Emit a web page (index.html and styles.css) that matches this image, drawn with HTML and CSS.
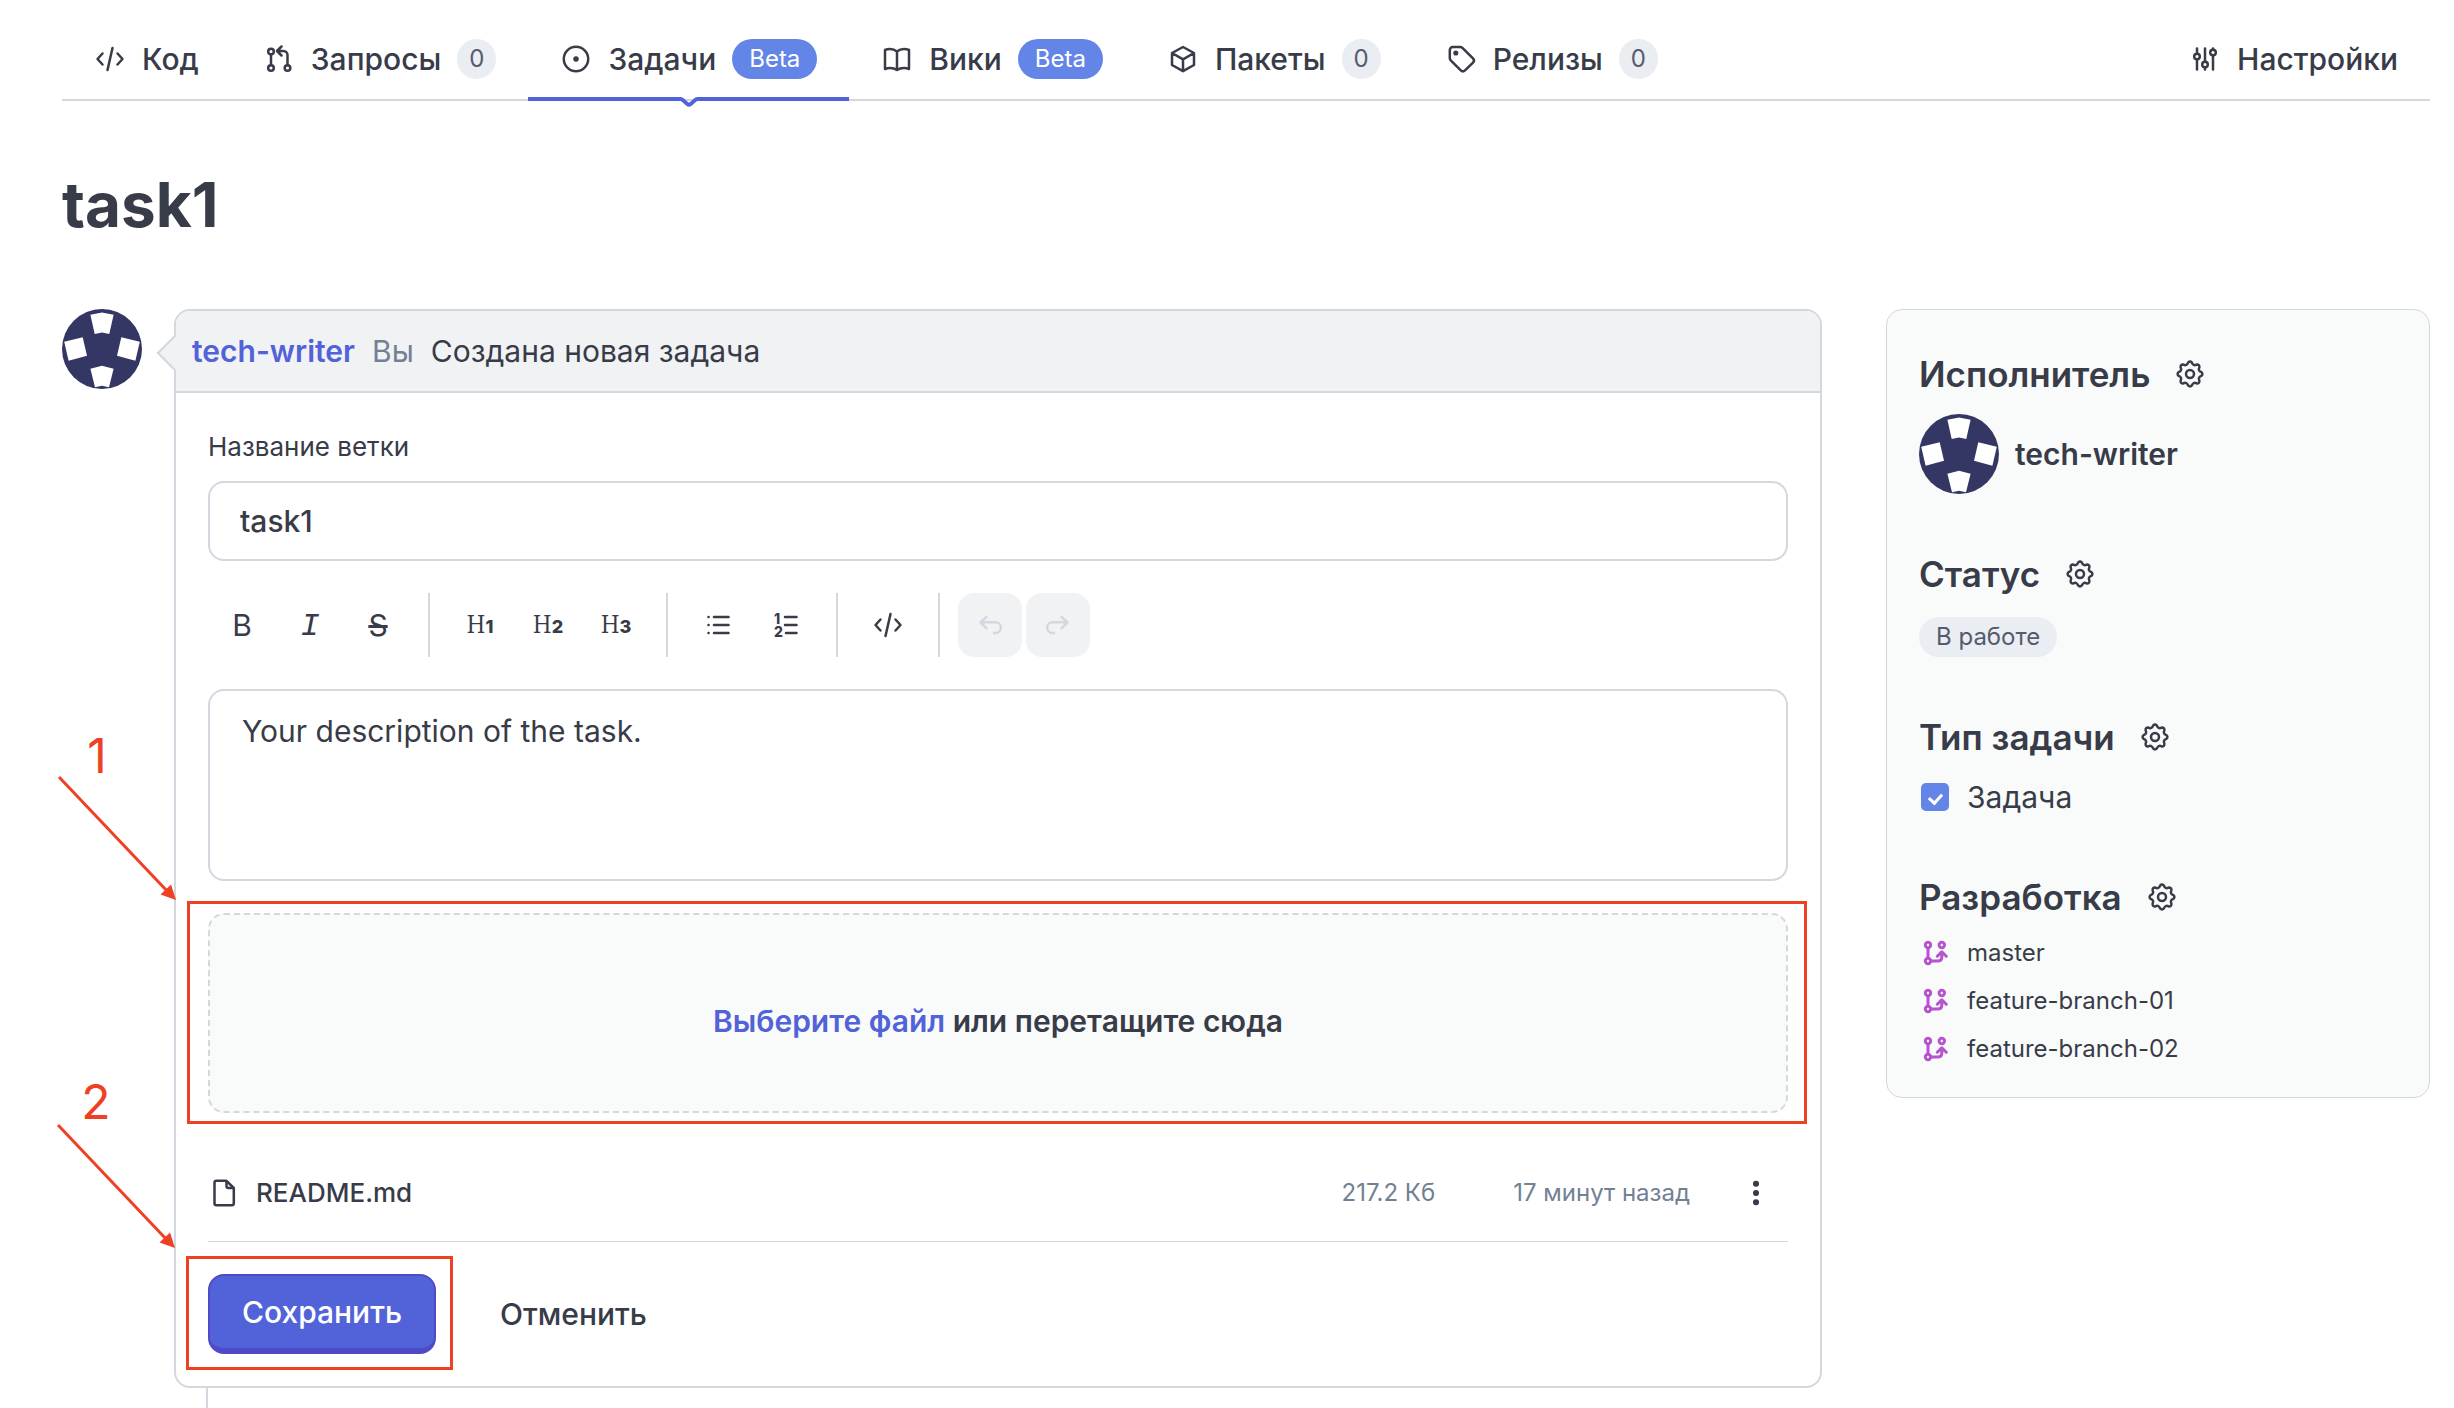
FILE: index.html
```html
<!DOCTYPE html>
<html lang="ru">
<head>
<meta charset="utf-8">
<meta name="viewport" content="width=device-width, initial-scale=1">
<title>task1</title>
<link rel="stylesheet" href="styles.css">
</head>
<body>
<svg class="sprite" aria-hidden="true">
  <symbol id="i-code" viewBox="0 0 32 32"><path d="M8.5 10.5 3.5 16l5 5.5M23.5 10.5l5 5.500-5 5.500M18.500 5l-5 22"/></symbol>
  <symbol id="i-pull" viewBox="0 0 32 32"><circle cx="8" cy="8.500" r="2.800"/><circle cx="8" cy="25" r="2.800"/><circle cx="24.500" cy="25" r="2.800"/><path d="M8 11.500V22M24.500 22V12a4 4 0 0 0-4-4H14M18.500 3.500 14 8l4.500 4.500"/></symbol>
  <symbol id="i-issue" viewBox="0 0 32 32"><circle cx="16" cy="16" r="12.200"/><circle class="solid" cx="16" cy="16" r="1.500"/></symbol>
  <symbol id="i-book" viewBox="0 0 32 32"><path d="M16 8.500C14 6.800 11.500 6 9 6 7.200 6 5.500 6.300 4 7v19c1.500-.7 3.200-1 5-1 2.500 0 5 .6 7 2 2-1.400 4.500-2 7-2 1.800 0 3.500.3 5 1V7c-1.500-.7-3.200-1-5-1-2.500 0-5 .8-7 2.500ZM16 8.500V26.500"/></symbol>
  <symbol id="i-box" viewBox="0 0 32 32"><path d="M16 4 27 10v12l-11 6.200L5 22V10ZM5 10l11 6.300L27 10M16 16.300v11.500"/></symbol>
  <symbol id="i-tag" viewBox="0 0 32 32"><path d="M4.800 7a3 3 0 0 1 3-3h7.400c.9 0 1.600.3 2.200.9L28 15.400a3 3 0 0 1 0 4.200L20 27.400a3 3 0 0 1-4.200 0L5.700 17.300c-.6-.6-.9-1.300-.9-2.200Z"/><circle class="solid" cx="10.800" cy="10" r="1.300"/></symbol>
  <symbol id="i-sliders" viewBox="0 0 32 32"><path d="M8 5.500v5M8 17v9.500M16 5.500V18M16 24.500v2M24 5.500V6M24 13v13.500"/><circle cx="8" cy="13.500" r="2.800"/><circle cx="16" cy="21.500" r="2.800"/><circle cx="24" cy="9.500" r="2.800"/></symbol>
  <symbol id="i-gear" viewBox="0 0 32 32"><path d="M14.100 4.600Q16 2.600 17.900 4.600 19.200 8.300 22.700 6.600 25.600 6.400 25.400 9.300 23.700 12.800 27.400 14.100 29.400 16 27.400 17.900 23.700 19.200 25.400 22.700 25.600 25.600 22.700 25.400 19.200 23.700 17.900 27.400 16 29.400 14.100 27.400 12.800 23.700 9.300 25.400 6.400 25.600 6.600 22.700 8.300 19.200 4.600 17.900 2.600 16 4.600 14.100 8.300 12.800 6.600 9.300 6.400 6.400 9.300 6.600 12.800 8.300 14.100 4.600Z"/><circle cx="16" cy="16" r="4"/></symbol>
  <symbol id="i-list" viewBox="0 0 32 32"><path d="M12 8h14.500M12 16h14.500M12 24h14.500M6.500 8h.1M6.500 16h.1M6.500 24h.1"/></symbol>
  <symbol id="i-undo" viewBox="0 0 32 32"><path d="M12.500 7.800 6.500 13.300l6 6M6.500 13.300h15a5.350 5.350 0 0 1 0 10.700H20"/></symbol>
  <symbol id="i-redo" viewBox="0 0 32 32"><path d="M19.500 7.800l6 5.500-6 6M25.500 13.300h-15a5.350 5.350 0 0 0 0 10.700H12"/></symbol>
  <symbol id="i-branch" viewBox="0 0 32 32"><circle cx="9" cy="8" r="2.700"/><circle cx="22.800" cy="8" r="2.700"/><circle cx="9" cy="24" r="2.700"/><path d="M9 11v10M12 24h6.800q4 0 4-4v-5M18.300 19.300l4.500-4.500 4.500 4.500"/></symbol>
  <symbol id="i-file" viewBox="0 0 32 32"><path d="M8.500 3.800h10L25.800 11v15.200a2 2 0 0 1-2 2H8.500a2 2 0 0 1-2-2V5.800a2 2 0 0 1 2-2ZM18.500 4v5a2 2 0 0 0 2 2h5"/></symbol>
  <symbol id="i-dots" viewBox="0 0 32 32"><circle class="solid" cx="16" cy="6.700" r="1.800"/><circle class="solid" cx="16" cy="16" r="1.800"/><circle class="solid" cx="16" cy="25.300" r="1.800"/></symbol>
  <symbol id="avatar" viewBox="0 0 80 80"><circle cx="40" cy="40" r="40" fill="#343663"/><path fill="#fff" d="M28.400 5.700 40 3.600l11.600 2.100L47.300 25 40 23.600 32.700 25ZM28.400 59.700 40 56.700l11.600 3L47 78.200 40 76.700 33 78.200ZM2.200 32.700l18.500-4.400L25 46.700 6.600 51.700ZM77.800 32.700l-18.500-4.400L55 46.700l18.400 5Z"/></symbol>
  <symbol id="arrow" viewBox="0 0 130 180"><path d="M9 47 118 162" fill="none" stroke="#ee4023" stroke-width="3"/><path d="M126 170 121 154.500 110.500 164.500Z" fill="#ee4023"/></symbol>
</svg>

<nav class="tabs">
  <a class="tab" href="#code"><svg class="icon"><use href="#i-code"/></svg>Код</a>
  <a class="tab" href="#pulls"><svg class="icon"><use href="#i-pull"/></svg>Запросы<span class="count">0</span></a>
  <a class="tab" href="#issues" aria-current="page"><svg class="icon"><use href="#i-issue"/></svg>Задачи<span class="beta">Beta</span>
    <span class="marker"><svg width="20" height="10" viewBox="0 0 20 10"><path d="M0 2h1.500q1.500 0 2.500 1.200L8.500 7.200q1.500 1 3 0L16 3.200Q17 2 18.500 2H20" fill="none" stroke="#5262d9" stroke-width="4"/></svg></span></a>
  <a class="tab" href="#wiki"><svg class="icon"><use href="#i-book"/></svg>Вики<span class="beta">Beta</span></a>
  <a class="tab" href="#packages"><svg class="icon"><use href="#i-box"/></svg>Пакеты<span class="count">0</span></a>
  <a class="tab" href="#releases"><svg class="icon"><use href="#i-tag"/></svg>Релизы<span class="count">0</span></a>
  <a class="tab tab-end" href="#settings"><svg class="icon"><use href="#i-sliders"/></svg>Настройки</a>
</nav>

<h1>task1</h1>

<main class="layout">
  <svg class="avatar" role="img" aria-label="tech-writer"><use href="#avatar"/></svg>

  <div class="thread">
    <form class="card">
      <header class="card-head">
        <a class="author" href="#tech-writer">tech-writer</a>
        <span class="you">Вы</span>
        <span>Создана новая задача</span>
      </header>
      <div class="card-body">
        <label class="field-label" for="branch">Название ветки</label>
        <input class="field" id="branch" type="text" value="task1">

        <div class="toolbar">
          <div class="tools">
            <button type="button" class="tool" aria-label="Жирный"><b class="glyph">B</b></button>
            <button type="button" class="tool" aria-label="Курсив"><i class="glyph glyph-italic">I</i></button>
            <button type="button" class="tool" aria-label="Зачёркнутый"><s class="glyph">S</s></button>
          </div>
          <div class="tools">
            <button type="button" class="tool tool-heading">H<span>1</span></button>
            <button type="button" class="tool tool-heading">H<span>2</span></button>
            <button type="button" class="tool tool-heading">H<span>3</span></button>
          </div>
          <div class="tools">
            <button type="button" class="tool" aria-label="Список"><svg class="icon"><use href="#i-list"/></svg></button>
            <button type="button" class="tool" aria-label="Нумерованный список"><svg class="icon" viewBox="0 0 32 32"><path d="M15 8h11.500M15 16h11.500M16 24h10.500"/><text class="digit" x="4" y="15">1</text><text class="digit" x="4" y="28">2</text></svg></button>
          </div>
          <div class="tools">
            <button type="button" class="tool" aria-label="Код"><svg class="icon"><use href="#i-code"/></svg></button>
          </div>
          <div class="tools">
            <button type="button" class="tool" disabled aria-label="Отменить ввод"><svg class="icon"><use href="#i-undo"/></svg></button>
            <button type="button" class="tool" disabled aria-label="Повторить ввод"><svg class="icon"><use href="#i-redo"/></svg></button>
          </div>
        </div>

        <textarea class="field field-area" aria-label="Описание">Your description of the task.</textarea>

        <div class="dropzone">
          <p><a href="#file">Выберите файл</a> или перетащите сюда</p>
          <div class="callout callout-drop">
            <svg class="pointer"><use href="#arrow"/><text x="47" y="43">1</text></svg>
          </div>
        </div>

        <div class="file">
          <svg class="icon"><use href="#i-file"/></svg>
          <span class="file-name">README.md</span>
          <span class="file-size">217.2 Кб</span>
          <time class="file-time">17 минут назад</time>
          <button type="button" class="tool" aria-label="Действия"><svg class="icon"><use href="#i-dots"/></svg></button>
        </div>

        <div class="actions">
          <div class="save">
            <button type="submit" class="btn btn-primary">Сохранить</button>
            <div class="callout callout-save">
              <svg class="pointer"><use href="#arrow"/><text x="47" y="41">2</text></svg>
            </div>
          </div>
          <button type="button" class="btn btn-plain">Отменить</button>
        </div>
      </div>
    </form>
    <div class="timeline"></div>
  </div>

  <aside class="side">
    <section class="side-block">
      <h2>Исполнитель <svg class="icon"><use href="#i-gear"/></svg></h2>
      <div class="person"><svg class="avatar" aria-hidden="true"><use href="#avatar"/></svg>tech-writer</div>
    </section>
    <section class="side-block">
      <h2>Статус <svg class="icon"><use href="#i-gear"/></svg></h2>
      <span class="status">В работе</span>
    </section>
    <section class="side-block">
      <h2>Тип задачи <svg class="icon"><use href="#i-gear"/></svg></h2>
      <label class="check"><input type="checkbox" checked>Задача</label>
    </section>
    <section class="side-block">
      <h2>Разработка <svg class="icon"><use href="#i-gear"/></svg></h2>
      <ul class="branches">
        <li><svg class="icon"><use href="#i-branch"/></svg>master</li>
        <li><svg class="icon"><use href="#i-branch"/></svg>feature-branch-01</li>
        <li><svg class="icon"><use href="#i-branch"/></svg>feature-branch-02</li>
      </ul>
    </section>
  </aside>
</main>
</body>
</html>
```
FILE: styles.css
```css
:root {
  --ink: #383b48;
  --muted: #728094;
  --line: #d3d8df;
  --accent: #5262d9;
  --blue: #6485e8;
  --red: #ee4023;
  --soft: #f9fbfa;
}

* { box-sizing: border-box; }

body {
  display: flex;
  flex-direction: column;
  min-height: 100vh;
  margin: 0;
  padding: 19px 24px 0 62px;
  background: #fff;
  color: var(--ink);
  font: 400 30px/40px Inter, "Liberation Sans", sans-serif;
}

h1, h2, p, ul { margin: 0; padding: 0; }
a { color: inherit; text-decoration: none; }
button, input, textarea { font: inherit; color: inherit; }
button { padding: 0; border: 0; background: none; }

.sprite { position: absolute; width: 0; height: 0; }

.icon {
  flex: none;
  width: 32px;
  height: 32px;
  fill: none;
  stroke: currentColor;
  stroke-width: 2.5;
  stroke-linecap: round;
  stroke-linejoin: round;
}
.solid { fill: currentColor; }

.avatar { display: block; flex: none; width: 80px; height: 80px; }

/* Tabs */
.tabs { display: flex; border-bottom: 2px solid var(--line); }
.tab {
  position: relative;
  display: flex;
  align-items: center;
  gap: 16px;
  height: 80px;
  padding: 0 32px;
  font-weight: 500;
}
.tab-end { margin-left: auto; }

.count, .beta, .status {
  border-radius: 20px;
  background: #eaedf1;
  color: #555b6e;
  font-size: 24px;
  font-weight: 400;
  line-height: 40px;
}
.count { padding: 0 12px; }
.beta { padding: 0 17px; background: var(--blue); color: #fff; }

.marker {
  position: absolute;
  right: 0;
  bottom: -8px;
  left: 0;
  display: flex;
}
.marker::before, .marker::after {
  content: "";
  flex: 1;
  height: 4px;
  background: var(--accent);
}

h1 { margin: 64px 0; font-size: 62px; font-weight: 700; line-height: 80px; }

/* Two-column layout */
.layout {
  display: grid;
  grid-template-columns: 80px minmax(0, 1fr) 544px;
  flex: 1;
}
.thread { display: flex; flex-direction: column; margin: 0 64px 0 32px; }
.timeline { flex: 1; min-height: 20px; margin-left: 32px; border-left: 2px solid var(--line); }

/* Comment card */
.card { border: 2px solid var(--line); border-radius: 16px; }
.card-head {
  position: relative;
  display: flex;
  align-items: center;
  gap: 17px;
  height: 82px;
  padding: 0 16px;
  border-bottom: 2px solid var(--line);
  border-radius: 14px 14px 0 0;
  background: #f1f2f4;
}
.card-head::before {
  content: "";
  position: absolute;
  top: 29px;
  left: -14px;
  width: 24px;
  height: 24px;
  border: solid var(--line);
  border-width: 0 0 2px 2px;
  background: #f1f2f4;
  transform: rotate(45deg);
}
.author { position: relative; color: var(--accent); font-weight: 600; }
.you { color: var(--muted); }

.card-body { display: flex; flex-direction: column; padding: 32px; }
.field-label { margin-bottom: 12px; font-size: 26px; line-height: 44px; }
.field {
  height: 80px;
  padding: 0 30px;
  border: 2px solid var(--line);
  border-radius: 16px;
  outline: 0;
  background: #fff;
  font-weight: 500;
}
.field-area {
  height: 192px;
  padding: 20px 32px;
  font-weight: 400;
  resize: none;
}

.toolbar { display: flex; gap: 18px; margin: 32px 2px; }
.tools { display: flex; gap: 4px; }
.tools + .tools::before {
  content: "";
  width: 2px;
  margin-right: 14px;
  background: var(--line);
}
.tool {
  display: flex;
  align-items: center;
  justify-content: center;
  width: 64px;
  height: 64px;
  border-radius: 16px;
}
.tool:disabled { background: #f1f2f4; color: var(--line); }
.glyph { font-weight: 400; }
.glyph-italic { padding-top: 4px; font-family: "Liberation Mono", monospace; font-size: 32px; }
.tool-heading {
  align-items: baseline;
  font: 400 24px/64px "DejaVu Serif Condensed", "DejaVu Serif", serif;
}
.tool-heading span { font: 800 18px/18px Inter, sans-serif; }
.digit { fill: currentColor; stroke: none; font: 800 14px Inter, sans-serif; }

.dropzone {
  position: relative;
  display: flex;
  align-items: center;
  justify-content: center;
  height: 200px;
  margin-top: 32px;
  padding-top: 16px;
  border: 2px dashed var(--line);
  border-radius: 16px;
  background: var(--soft);
  font-weight: 600;
}
.dropzone a { color: var(--accent); }

.file {
  display: flex;
  align-items: center;
  height: 97px;
  margin-top: 32px;
  border-bottom: 1px solid var(--line);
  font-size: 24px;
}
.file-name { flex: 1; margin-left: 16px; font-size: 26px; font-weight: 500; }
.file-size, .file-time { color: var(--muted); }
.file-time { margin: 0 34px 0 78px; }

.actions { display: flex; gap: 32px; margin-top: 32px; }
.save { position: relative; }
.btn { height: 80px; padding: 0 32px; border-radius: 16px; font-weight: 500; }
.btn-primary {
  border: 2px solid #4f4bc8;
  border-bottom-width: 6px;
  background: var(--accent);
  color: #fff;
}

/* Red callouts */
.callout { position: absolute; border: 3px solid var(--red); pointer-events: none; }
.callout-drop { top: -14px; right: -21px; bottom: -13px; left: -23px; }
.callout-save { top: -18px; right: -17px; bottom: -16px; left: -22px; }
.pointer {
  position: absolute;
  top: -174px;
  left: -140px;
  width: 130px;
  height: 180px;
  overflow: visible;
  fill: var(--red);
  font-size: 48px;
  font-weight: 400;
  text-anchor: middle;
}
.callout-save .pointer { top: -181px; }

/* Sidebar */
.side {
  align-self: start;
  display: flex;
  flex-direction: column;
  gap: 48px;
  padding: 32px 32px 24px;
  border: 1px solid var(--line);
  border-radius: 16px;
  background: var(--soft);
}
h2 {
  display: flex;
  align-items: center;
  gap: 24px;
  font-size: 35px;
  font-weight: 600;
  line-height: 64px;
}
.person { display: flex; align-items: center; gap: 16px; margin-top: 8px; font-weight: 600; }
.status { display: block; width: max-content; margin-top: 11px; padding: 0 17px; }
.check { display: flex; align-items: center; gap: 18px; margin-top: 8px; }
.check input {
  display: flex;
  justify-content: center;
  width: 28px;
  height: 28px;
  margin: 0 0 0 2px;
  border-radius: 5px;
  background: var(--blue);
  appearance: none;
}
.check input::after {
  content: "";
  width: 6px;
  height: 10px;
  margin-top: 8px;
  border: solid #fff;
  border-width: 0 3px 3px 0;
  transform: rotate(42deg);
}
.branches { list-style: none; font-size: 24px; }
.branches li { display: flex; align-items: center; gap: 16px; line-height: 48px; }
.branches .icon { color: #b852cf; stroke-width: 3; }
```
